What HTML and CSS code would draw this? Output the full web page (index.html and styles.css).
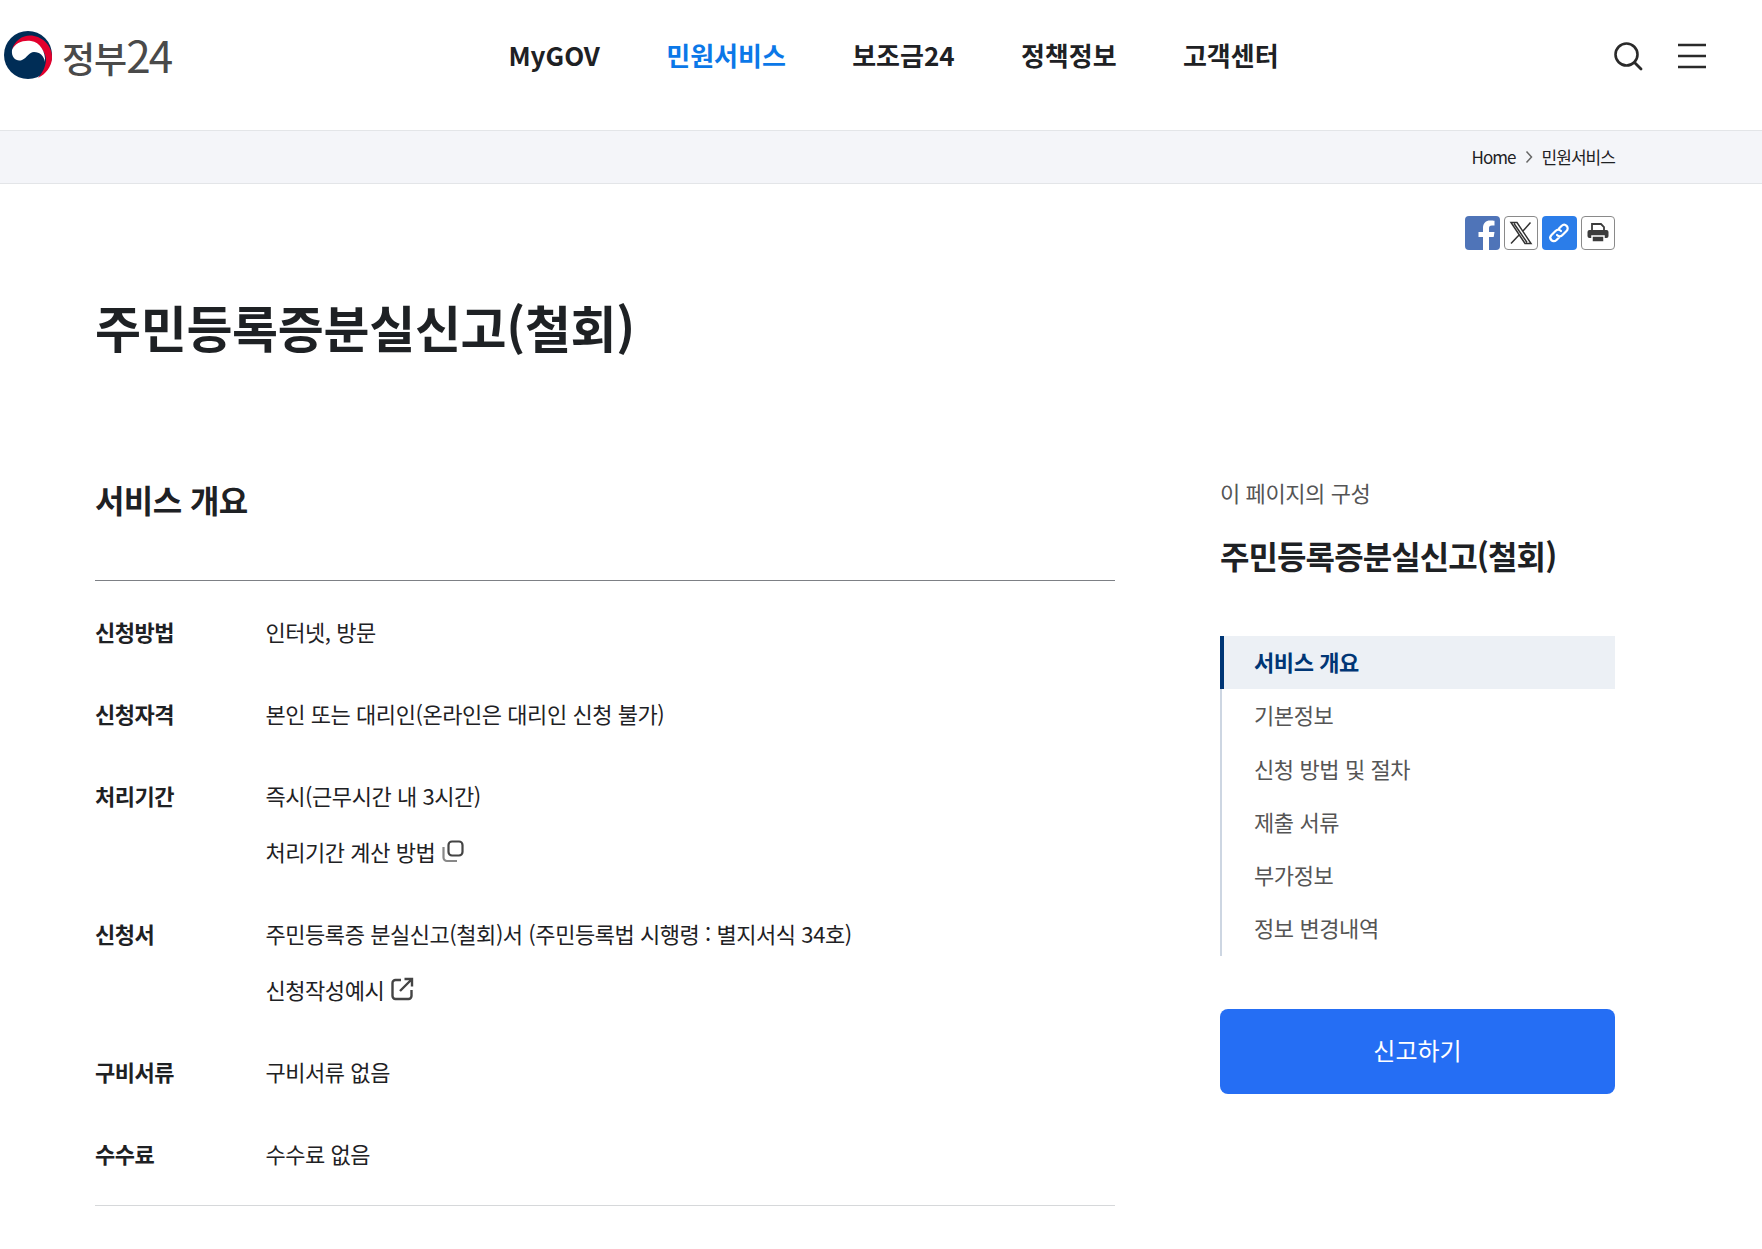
FILE: index.html
```html
<!DOCTYPE html>
<html lang="ko">
<head>
<meta charset="utf-8">
<title>주민등록증분실신고(철회) | 정부24</title>
<link rel="stylesheet" href="styles.css">
</head>
<body>
<header class="site-header">
  <a class="logo">
    <svg class="logo-mark" viewBox="0 0 50 48" width="50" height="48" aria-hidden="true">
      <circle cx="25" cy="24" r="24" fill="#002d56"/>
      <path d="M9 19C12 8 22 3 31 5C42 7 50 17 49 28C48 36 43 43 35 47C40 41 43 35 43 28C42 16 30 9 21 11C15 12 11 15 9 19Z" fill="#e2002d"/>
      <path d="M9 19C12 12 20 9 28 10C37 11 43 21 42 31C41 25 37 21 31 21C26 21 24 27 19 29C14 31 8 27 9 19Z" fill="#fff"/>
    </svg>
    <span class="logo-text">정부<span class="logo-num">24</span></span>
  </a>
  <nav class="main-nav">
    <a>MyGOV</a>
    <a class="is-active">민원서비스</a>
    <a>보조금24</a>
    <a>정책정보</a>
    <a>고객센터</a>
  </nav>
  <div class="header-tools">
    <svg viewBox="0 0 30 30" width="30" height="30" aria-hidden="true"><circle cx="13.5" cy="13.5" r="11" fill="none" stroke="#2a2a2a" stroke-width="2.6"/><path d="M21.5 21.5 28 28" stroke="#2a2a2a" stroke-width="2.8" stroke-linecap="round"/></svg>
    <svg viewBox="0 0 28 26" width="28" height="26" aria-hidden="true"><path d="M0 2h28M0 13h28M0 24h28" stroke="#2a2a2a" stroke-width="2.6"/></svg>
  </div>
</header>
<div class="crumb-bar">
  <div class="crumbs">
    <span>Home</span>
    <svg viewBox="0 0 8 14" width="8" height="14" aria-hidden="true"><path d="M1.500 1.500 6.500 7l-5 5.500" fill="none" stroke="#666" stroke-width="1.500"/></svg>
    <span>민원서비스</span>
  </div>
</div>
<div class="page">
  <div class="share">
    <span class="share-btn share-fb"><svg viewBox="0 0 35 34" width="35" height="34" aria-hidden="true"><path d="M18 34V21h-4.500v-5H18v-4c0-5 3-7.500 7-7.500 2 0 3.500.2 4.500.3v4.700H27c-2.500 0-3 1.200-3 3V16h5.500l-.8 5H24v13z" fill="#fff"/></svg></span>
    <span class="share-btn share-line"><svg viewBox="0 0 26 26" width="26" height="26" aria-hidden="true"><path d="M3 2.500h6L23 23.500h-6zM6 3.500 19 22.500M22.500 2.500 14.500 11.500M11.500 14.500 3 23.500" fill="none" stroke="#333" stroke-width="1.500"/></svg></span>
    <span class="share-btn share-link"><svg viewBox="0 0 26 26" width="26" height="26" aria-hidden="true"><path d="M11 15c2 2 4 1.500 5.500 0l4-4c3.500-3.500-1.500-8.500-5-5l-2.500 2.500M15 11c-2-2-4-1.500-5.500 0l-4 4c-3.500 3.500 1.500 8.500 5 5l2.500-2.500" fill="none" stroke="#fff" stroke-width="2.200" stroke-linecap="round"/></svg></span>
    <span class="share-btn share-line"><svg viewBox="0 0 24 24" width="24" height="24" aria-hidden="true"><path d="M6 10V3h9l3 3v4z" fill="none" stroke="#3c3c3c" stroke-width="1.800"/><rect x="1.500" y="9" width="21" height="8" rx="2" fill="#3c3c3c"/><path d="M6 15h12v6H6z" fill="#3c3c3c" stroke="#fff" stroke-width="1.500"/></svg></span>
  </div>
  <h1 class="page-title">주민등록증분실신고(철회)</h1>
  <div class="columns">
    <main class="content">
      <h2 class="section-title">서비스 개요</h2>
      <dl class="overview">
        <div class="row"><dt>신청방법</dt><dd><p>인터넷, 방문</p></dd></div>
        <div class="row"><dt>신청자격</dt><dd><p>본인 또는 대리인(온라인은 대리인 신청 불가)</p></dd></div>
        <div class="row"><dt>처리기간</dt><dd><p>즉시(근무시간 내 3시간)</p>
          <p class="with-icon">처리기간 계산 방법
            <svg viewBox="0 0 24 24" width="24" height="24" aria-hidden="true"><rect x="7.500" y="2.500" width="14" height="14" rx="3.500" fill="none" stroke="#444" stroke-width="2.200"/><path d="M2.500 8v10.500a3.500 3.500 0 0 0 3.500 3.500H16" fill="none" stroke="#888" stroke-width="2.200"/></svg>
          </p></dd></div>
        <div class="row"><dt>신청서</dt><dd><p>주민등록증 분실신고(철회)서 (주민등록법 시행령 : 별지서식 34호)</p>
          <p class="with-icon">신청작성예시
            <svg viewBox="0 0 24 24" width="24" height="24" aria-hidden="true"><path d="M11 3H5.500A3 3 0 0 0 2.500 6v13A3 3 0 0 0 5.500 22h13a3 3 0 0 0 3-3v-6M10 14 22 2M14.500 2H22v7.500" fill="none" stroke="#444" stroke-width="2.400"/></svg>
          </p></dd></div>
        <div class="row"><dt>구비서류</dt><dd><p>구비서류 없음</p></dd></div>
        <div class="row"><dt>수수료</dt><dd><p>수수료 없음</p></dd></div>
      </dl>
    </main>
    <aside class="toc">
      <p class="toc-label">이 페이지의 구성</p>
      <p class="toc-title">주민등록증분실신고(철회)</p>
      <ul class="toc-list">
        <li class="is-current">서비스 개요</li>
        <li>기본정보</li>
        <li>신청 방법 및 절차</li>
        <li>제출 서류</li>
        <li>부가정보</li>
        <li>정보 변경내역</li>
      </ul>
      <a class="cta">신고하기</a>
    </aside>
  </div>
</div>
</body>
</html>
```
FILE: styles.css
```css
* { box-sizing: border-box; }
html, body { margin: 0; padding: 0; }
body {
  font-family: "Noto Sans CJK KR", "Noto Sans", sans-serif;
  color: #1e2124;
  background: #fff;
  height: 1249px;
  overflow: hidden;
}
p, h1, h2, dl, dd, ul { margin: 0; padding: 0; }
.site-header {
  height: 130px;
  display: grid;
  grid-template-columns: 1fr auto 1fr;
  align-items: start;
  padding: 31px 56px 0 3px;
}
.logo { display: flex; align-items: center; gap: 9px; }
.logo-mark { flex: none; }
.logo-text {
  font-size: 36px;
  line-height: 44px;
  font-weight: 500;
  letter-spacing: -1px;
  color: #4a4a4a;
}
.logo-num {
  font-size: 44px;
  font-weight: 400;
  letter-spacing: -2px;
}
.main-nav {
  display: flex;
  gap: 66.300px;
  padding-top: 4px;
  margin-left: 78px;
}
.main-nav a {
  font-size: 26px;
  line-height: 40px;
  font-weight: 700;
  color: #1e2124;
}
.main-nav a.is-active { color: #0b78e8; }
.header-tools {
  display: flex;
  justify-content: flex-end;
  align-items: center;
  gap: 35px;
  padding-top: 10px;
}
.crumb-bar {
  height: 54px;
  background: #f4f5f9;
  border-top: 1px solid #e3e5e8;
  border-bottom: 1px solid #e3e5e8;
}
.crumbs {
  width: 1520px;
  margin-left: 95px;
  height: 100%;
  display: flex;
  justify-content: flex-end;
  align-items: center;
  gap: 9px;
  font-size: 17px;
  line-height: 24px;
  letter-spacing: -0.95px;
  color: #1e2124;
  padding-bottom: 1px;
}
.page { width: 1520px; margin-left: 95px; }
.share {
  display: flex;
  justify-content: flex-end;
  gap: 4px;
  padding-top: 32px;
}
.share-btn {
  width: 34.500px;
  height: 34px;
  border-radius: 4px;
  display: flex;
  align-items: center;
  justify-content: center;
  overflow: hidden;
}
.share-fb { background: #4f74b8; align-items: flex-end; width: 35px; }
.share-line { background: #fff; border: 1px solid #8a8a8a; }
.share-link { background: #2b7de9; }
.page-title {
  font-size: 50px;
  line-height: 72px;
  font-weight: 700;
  letter-spacing: -0.3px;
  color: #1e2124;
  margin-top: 40px;
}
.columns {
  display: grid;
  grid-template-columns: 1020px 395px;
  justify-content: space-between;
  margin-top: 114px;
}
.section-title {
  font-size: 32px;
  line-height: 46px;
  font-weight: 700;
  letter-spacing: -0.6px;
  color: #1e2124;
}
.overview {
  margin-top: 58px;
  border-top: 1px solid #7d8085;
  border-bottom: 1px solid #d6d8da;
  padding: 35px 0 37px;
  display: flex;
  flex-direction: column;
  gap: 52px;
}
.row { display: grid; grid-template-columns: 170.500px 1fr; }
dt {
  font-size: 22px;
  line-height: 30px;
  font-weight: 700;
  letter-spacing: -0.45px;
}
dd { display: flex; flex-direction: column; gap: 26px; }
dd p {
  font-size: 22px;
  line-height: 30px;
  letter-spacing: -0.45px;
  color: #1e2124;
}
.with-icon { display: flex; align-items: center; gap: 6px; }
.toc-label {
  font-size: 22px;
  line-height: 30px;
  letter-spacing: -0.4px;
  color: #555;
  margin-top: 1px;
}
.toc-title {
  font-size: 32px;
  line-height: 46px;
  font-weight: 700;
  letter-spacing: -0.9px;
  margin-top: 25px;
}
.toc-list {
  list-style: none;
  margin-top: 58px;
  border-left: 2px solid #cdd6e2;
}
.toc-list li {
  height: 53.300px;
  line-height: 50px;
  padding-left: 32px;
  font-size: 22px;
  letter-spacing: -0.4px;
  color: #555;
}
.toc-list li.is-current {
  margin-left: -2px;
  border-left: 4px solid #003675;
  background: #ecf0f5;
  color: #003675;
  font-weight: 700;
  padding-left: 30px;
}
.cta {
  display: block;
  margin-top: 53px;
  height: 85px;
  line-height: 81px;
  text-align: center;
  border-radius: 8px;
  background: #256ef4;
  color: #fff;
  font-size: 24px;
}
```
